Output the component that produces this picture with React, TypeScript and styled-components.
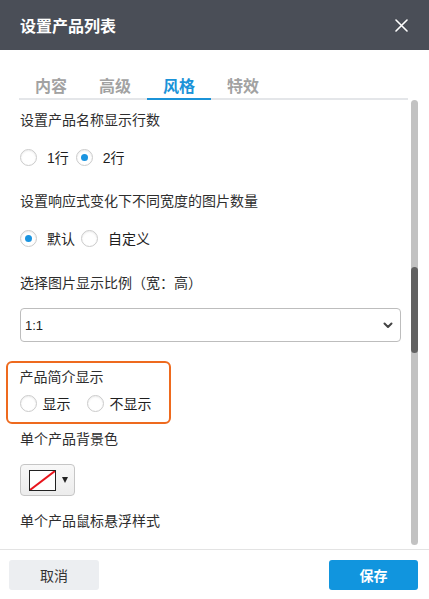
import styled, { createGlobalStyle } from "styled-components";
import { FunctionComponent } from "react";

const GlobalStyle = createGlobalStyle`
  html, body {
    margin: 0;
    padding: 0;
    background: #ffffff;
  }
  body {
    font-family: "Liberation Sans", "Noto Sans CJK SC", sans-serif;
    color: #333333;
  }
`;

interface RadioOptionProps {
  label: string;
  checked?: boolean;
  labelGap?: number;
  after?: number;
}

const RadioOption: FunctionComponent<RadioOptionProps> = ({
  label,
  checked,
  labelGap = 10,
  after = 7,
}) => (
  <RadioItem $labelGap={labelGap} $after={after}>
    <RadioCircle $checked={!!checked} />
    <span>{label}</span>
  </RadioItem>
);

const tabs = ["内容", "高级", "风格", "特效"];

const App = () => {
  return (
    <>
      <GlobalStyle />
      <Dialog>
        <Header>
          <HeaderTitle>设置产品列表</HeaderTitle>
          <CloseBtn aria-label="关闭">
            <svg width="13" height="13" viewBox="0 0 13 13">
              <path
                d="M1 1 L12 12 M12 1 L1 12"
                stroke="#ffffff"
                strokeWidth="1.6"
                strokeLinecap="round"
              />
            </svg>
          </CloseBtn>
        </Header>

        <TabArea>
          <TabBar>
            {tabs.map((t) => (
              <Tab key={t} $active={t === "风格"}>
                {t}
              </Tab>
            ))}
          </TabBar>
        </TabArea>

        <Body>
          <Content>
            <Label>设置产品名称显示行数</Label>
            <RadioRow $mt={18}>
              <RadioOption label="1行" />
              <RadioOption label="2行" checked />
            </RadioRow>

            <Label $mt={25}>设置响应式变化下不同宽度的图片数量</Label>
            <RadioRow $mt={18}>
              <RadioOption label="默认" checked after={6} />
              <RadioOption label="自定义" />
            </RadioRow>

            <Label $mt={26}>选择图片显示比例（宽：高）</Label>
            <SelectBox>
              <span>1:1</span>
              <svg width="10" height="7" viewBox="0 0 10 7">
                <path
                  d="M1.5 1.5 L5 5 L8.5 1.5"
                  fill="none"
                  stroke="#444"
                  strokeWidth="2"
                  strokeLinecap="round"
                  strokeLinejoin="round"
                />
              </svg>
            </SelectBox>

            <Highlight>
              <Label>产品简介显示</Label>
              <RadioRow $mt={7}>
                <RadioOption label="显示" labelGap={6} after={16} />
                <RadioOption label="不显示" labelGap={6} />
              </RadioRow>
            </Highlight>

            <Label $mt={5}>单个产品背景色</Label>
            <ColorButton>
              <Swatch>
                <svg width="25" height="19" viewBox="0 0 25 19">
                  <path d="M0 19 L25 0" stroke="#e8141c" strokeWidth="2" />
                </svg>
              </Swatch>
              <Caret />
            </ColorButton>

            <Label $mt={15}>单个产品鼠标悬浮样式</Label>
          </Content>
          <ScrollTrack>
            <ScrollThumb />
          </ScrollTrack>
        </Body>

        <Footer>
          <CancelBtn>取消</CancelBtn>
          <SaveBtn>保存</SaveBtn>
        </Footer>
      </Dialog>
    </>
  );
};

export default App;

// styled-components
const Dialog = styled.div`
  width: 429px;
  height: 599px;
  display: flex;
  flex-direction: column;
  background: #ffffff;
  overflow: hidden;
`;

const Header = styled.header`
  height: 50px;
  flex-shrink: 0;
  display: flex;
  align-items: center;
  justify-content: space-between;
  padding: 0 21px 0 20px;
  background: #4a4e57;
  box-sizing: border-box;
`;

const HeaderTitle = styled.span`
  font-family: "Noto Sans CJK SC", sans-serif;
  font-size: 16px;
  font-weight: bold;
  color: #ffffff;
`;

const CloseBtn = styled.button`
  display: flex;
  padding: 0;
  border: none;
  background: none;
  cursor: pointer;
`;

const TabArea = styled.div`
  flex-shrink: 0;
  padding: 24px 21px 0 19px;
`;

const TabBar = styled.div`
  display: flex;
  border-bottom: 2px solid #e4e6e9;
`;

const Tab = styled.div<{ $active: boolean }>`
  width: 64px;
  height: 24px;
  margin-bottom: -2px;
  text-align: center;
  font-family: "Noto Sans CJK SC", sans-serif;
  font-size: 16px;
  font-weight: bold;
  line-height: 22px;
  color: ${(p) => (p.$active ? "#1b93d8" : "#a2a2a2")};
  border-bottom: 2px solid ${(p) => (p.$active ? "#1b93d8" : "transparent")};
`;

const Body = styled.div`
  flex: 1;
  display: flex;
  overflow: hidden;
`;

const Content = styled.div`
  flex: 1;
  padding: 10px 10px 0 20px;
  display: flex;
  flex-direction: column;
  align-items: flex-start;
`;

const Label = styled.div<{ $mt?: number }>`
  margin-top: ${(p) => p.$mt ?? 0}px;
  font-size: 14px;
  line-height: 20px;
  color: #2e2e2e;
`;

const RadioRow = styled.div<{ $mt?: number }>`
  margin-top: ${(p) => p.$mt ?? 0}px;
  display: flex;
  align-items: center;
  height: 18px;
`;

const RadioItem = styled.label<{ $labelGap: number; $after: number }>`
  display: flex;
  align-items: center;
  gap: ${(p) => p.$labelGap}px;
  margin-right: ${(p) => p.$after}px;
  font-size: 14px;
  color: #1e1e1e;
`;

const RadioCircle = styled.span<{ $checked: boolean }>`
  width: 17px;
  height: 17px;
  box-sizing: border-box;
  border-radius: 50%;
  border: 1px solid #cbcbcb;
  background: #ffffff;
  box-shadow: inset 0 1px 2px rgba(0, 0, 0, 0.08);
  display: flex;
  align-items: center;
  justify-content: center;

  &::after {
    content: "";
    width: 7px;
    height: 7px;
    border-radius: 50%;
    background: ${(p) => (p.$checked ? "#1a94e0" : "transparent")};
  }
`;

const SelectBox = styled.div`
  margin-top: 15px;
  align-self: stretch;
  height: 34px;
  box-sizing: border-box;
  border: 1px solid #bdbdbd;
  border-radius: 4px;
  display: flex;
  align-items: center;
  justify-content: space-between;
  padding: 0 7px 0 4px;
  font-size: 13px;
  color: #222222;
`;

const Highlight = styled.div`
  margin: 19px 0 0 -14px;
  width: 165px;
  height: 63px;
  box-sizing: border-box;
  border: 2.5px solid #ee6a1e;
  border-radius: 6px;
  padding: 4px 0 0 11.5px;
`;

const ColorButton = styled.div`
  margin-top: 15px;
  width: 55px;
  height: 32px;
  box-sizing: border-box;
  border: 1px solid #c6c6c6;
  border-radius: 4px;
  background: linear-gradient(#f8f8f8, #ececec);
  display: flex;
  align-items: center;
  padding-left: 8px;
  gap: 6px;
`;

const Swatch = styled.div`
  width: 27px;
  height: 21px;
  box-sizing: border-box;
  border: 1px solid #222222;
  background: #ffffff;
  display: flex;
`;

const Caret = styled.span`
  width: 0;
  height: 0;
  border-left: 3.5px solid transparent;
  border-right: 3.5px solid transparent;
  border-top: 6px solid #222222;
`;

const ScrollTrack = styled.div`
  width: 7px;
  margin: 0 11px 4px 0;
  border-radius: 4px;
  background: #c2c2c2;
  display: flex;
  flex-direction: column;
`;

const ScrollThumb = styled.div`
  margin-top: 167px;
  height: 86px;
  border-radius: 4px;
  background: #616161;
`;

const Footer = styled.footer`
  height: 50px;
  flex-shrink: 0;
  box-sizing: border-box;
  border-top: 1px solid #e3e3e3;
  display: flex;
  align-items: flex-start;
  justify-content: space-between;
  padding: 10px 11px 0 9px;
`;

const FooterBtn = styled.button`
  width: 90px;
  height: 30px;
  border: none;
  border-radius: 3px;
  font-family: "Noto Sans CJK SC", sans-serif;
  font-size: 14px;
  cursor: pointer;
`;

const CancelBtn = styled(FooterBtn)`
  background: #eceef1;
  color: #333333;
`;

const SaveBtn = styled(FooterBtn)`
  width: 89px;
  background: #1195de;
  color: #ffffff;
  font-weight: bold;
`;
